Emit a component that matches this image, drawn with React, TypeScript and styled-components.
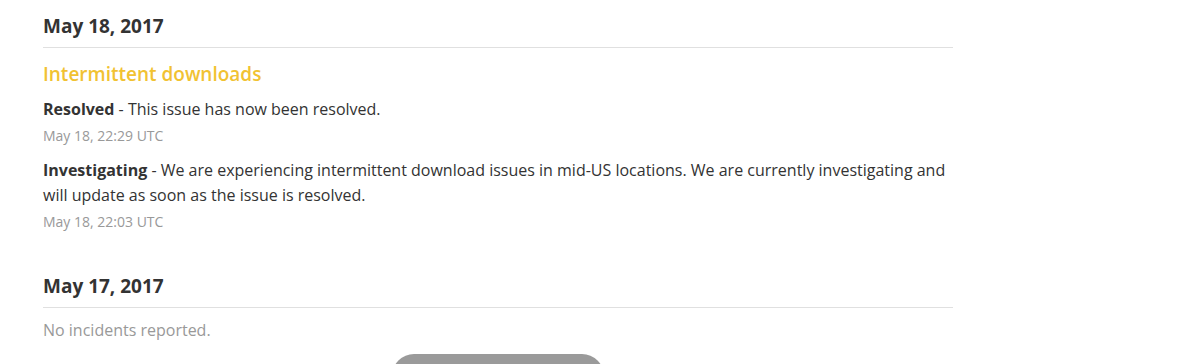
import React from "react";
import styled, { createGlobalStyle } from "styled-components";

const Global = createGlobalStyle`
  html, body { margin: 0; padding: 0; background: #fff; }
  body { font-family: "Open Sans", "Lato", sans-serif; color: #333; overflow: hidden; }
`;

const Page = styled.div`
  width: 1200px;
  height: 364px;
  overflow: hidden;
  padding: 0 0 0 43px;
  box-sizing: border-box;
`;

const Column = styled.div`
  width: 910px;
  display: flex;
  flex-direction: column;
`;

const DayList = styled.div`
  display: flex;
  flex-direction: column;
  gap: 29px;
`;

const Day = styled.section`
  display: flex;
  flex-direction: column;
`;

const DateHeading = styled.h2`
  margin: 0;
  padding: 14px 0 9px;
  font-size: 19px;
  line-height: 24px;
  font-weight: 700;
  color: #333;
  border-bottom: 1px solid #e0e0e0;
`;

const IncidentTitle = styled.h3`
  margin: 13px 0 0;
  font-size: 19px;
  line-height: 26px;
  font-weight: 600;
  color: #f1c232;
`;

const Update = styled.div`
  margin-top: 13px;
  &:first-of-type { margin-top: 10px; }
`;

const UpdateText = styled.p`
  margin: 0;
  font-size: 16px;
  line-height: 25px;
  color: #333;
`;

const Status = styled.strong`
  font-weight: 700;
`;

const Timestamp = styled.small`
  display: block;
  font-size: 14px;
  line-height: 18px;
  color: #999;
  margin-top: 5px;
`;

const Empty = styled.p`
  margin: 11px 0 0;
  font-size: 16px;
  line-height: 22px;
  color: #999;
`;

const Footer = styled.div`
  display: flex;
  justify-content: center;
  margin-top: 13px;
`;

const HistoryButton = styled.button`
  width: 212px;
  height: 44px;
  flex-shrink: 0;
  border: none;
  border-radius: 22px;
  background: #9a9a9a;
`;

export default function App() {
  return (
    <>
      <Global />
      <Page>
        <Column>
          <DayList>
            <Day>
              <DateHeading>May 18, 2017</DateHeading>
              <IncidentTitle>Intermittent downloads</IncidentTitle>
              <Update>
                <UpdateText>
                  <Status>Resolved</Status> - This issue has now been resolved.
                </UpdateText>
                <Timestamp>May 18, 22:29 UTC</Timestamp>
              </Update>
              <Update>
                <UpdateText>
                  <Status>Investigating</Status> - We are experiencing intermittent download issues in mid-US locations. We are currently investigating and will update as soon as the issue is resolved.
                </UpdateText>
                <Timestamp>May 18, 22:03 UTC</Timestamp>
              </Update>
            </Day>
            <Day>
              <DateHeading>May 17, 2017</DateHeading>
              <Empty>No incidents reported.</Empty>
            </Day>
          </DayList>
          <Footer>
            <HistoryButton aria-label="Incident History" />
          </Footer>
        </Column>
      </Page>
    </>
  );
}
